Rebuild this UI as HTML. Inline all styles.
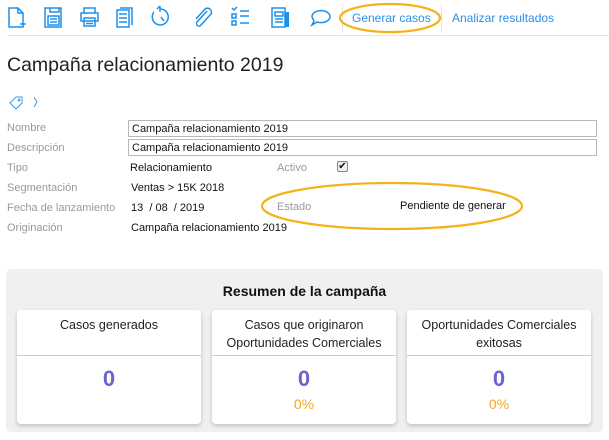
<!DOCTYPE html>
<html><head><meta charset="utf-8"><style>
*{margin:0;padding:0;box-sizing:border-box}
body{width:609px;height:440px;background:#fff;font-family:"Liberation Sans",sans-serif;position:relative;overflow:hidden;color:#111}
.a{position:absolute}
.lbl{position:absolute;left:7px;font-size:11px;color:#9a9a9a}
.val{position:absolute;font-size:11px;color:#111}
.inp{position:absolute;left:128px;width:469px;height:17px;border:1px solid #b9b9b9;font-size:11px;padding:2px 3px}
.card{position:absolute;top:310px;width:184px;height:114px;background:#fff;border-radius:4px;box-shadow:0 2px 4px rgba(0,0,0,.2);text-align:center}
.card .h{height:46px;border-bottom:1px solid #ccc;font-size:12.5px;line-height:18px;padding-top:6px;color:#222}
.card .n{font-size:22px;font-weight:bold;color:#6a63d0;margin-top:10px}
.card .p{font-size:14px;color:#f5a623;margin-top:4px}
svg{position:absolute}
</style></head><body>
<svg width="340" height="36" style="left:0;top:0" fill="none" stroke="#1e90e8" stroke-width="1.5">
<path d="M9 8h9l5 5v14H9z M18 8v5h5 M20 24h6 M23 21v6"/>
<path d="M45 8h16v19H45z M50 8v4h9V8 M48 16h11v9H48z M50 19h7 M50 22h7"/>
<path d="M84 8h11v5H84z M81 13h17v8H81z M84 18h11v8H84z M86 21h7 M86 23.5h7"/>
<path d="M120 8h12v17 M117 10h12v17h-12z M119 14h8 M119 18h8 M119 22h8"/>
<path d="M160 9a8 8 0 1 1-6 3 M160 6v6 M157 9l3-3 M161 17l3 4"/>
<path d="M207 11l-10 11a2.5 2.5 0 0 0 4 3l10-11a4 4 0 0 0-6-5l-9 10"/>
<path d="M232 8l2 2 3-3 M232 14h4v4h-4z M232 21h4v4h-4z M240 11h9 M240 16h9 M240 23h9"/>
<path d="M272 8h13v19h-13z M275 12h8v4h-8z M275 19h8 M275 22h8"/><rect x="285" y="12" width="4" height="15" fill="#1e90e8" stroke="none"/>
<path d="M312 17a9 6 0 1 1 5 5l-5 3 2-4z"/>
</svg>
<div class="a" style="left:342px;top:5px;width:1px;height:28px;background:#e2e2e2"></div>
<div class="a" style="left:441px;top:5px;width:1px;height:28px;background:#e2e2e2"></div>
<div class="a" style="left:352px;top:11px;font-size:12px;color:#2d8ee6">Generar casos</div>
<div class="a" style="left:452px;top:11px;font-size:12px;color:#2d8ee6">Analizar resultados</div>
<div class="a" style="left:7px;top:35px;width:602px;height:1px;background:#e4e4e4"></div>
<svg width="609" height="440" style="left:0;top:0" fill="none" stroke="#f5b218" stroke-width="2.2">
<ellipse cx="390" cy="18" rx="50" ry="14"/>
<ellipse cx="392" cy="206" rx="130" ry="23"/>
</svg>
<div class="a" style="left:7px;top:54px;font-size:19.5px;color:#222">Campaña relacionamiento 2019</div>
<svg width="40" height="16" style="left:8px;top:95px" fill="none" stroke="#3a9ae8" stroke-width="1">
<path d="M2 8l6-6h6v6l-6 6z"/><circle cx="11" cy="5" r="1"/><path d="M26 2l3 5-3 5"/>
</svg>
<div class="lbl" style="top:122px">Nombre</div>
<div class="lbl" style="top:142px">Descripción</div>
<div class="lbl" style="top:162px">Tipo</div>
<div class="lbl" style="top:182px">Segmentación</div>
<div class="lbl" style="top:202px">Fecha de lanzamiento</div>
<div class="lbl" style="top:222px">Originación</div>
<div class="inp" style="top:120px">Campaña relacionamiento 2019</div>
<div class="inp" style="top:139px">Campaña relacionamiento 2019</div>
<div class="val" style="left:130px;top:162px">Relacionamiento</div>
<div class="lbl" style="left:277px;top:162px">Activo</div>
<div class="a" style="left:337px;top:161px;width:11px;height:11px;border:1px solid #888;border-radius:2px;background:#eee;font-size:10px;line-height:9px;text-align:center">✔</div>
<div class="val" style="left:131px;top:182px">Ventas &gt; 15K 2018</div>
<div class="val" style="left:131px;top:202px">13 &nbsp;/ 08 &nbsp;/ 2019</div>
<div class="lbl" style="left:277px;top:201px">Estado</div>
<div class="val" style="left:400px;top:200px">Pendiente de generar</div>
<div class="val" style="left:131px;top:222px">Campaña relacionamiento 2019</div>
<div class="a" style="left:6px;top:269px;width:597px;height:163px;background:#f0f0f0;border-radius:5px"></div>
<div class="a" style="left:6px;top:283px;width:597px;text-align:center;font-size:14px;font-weight:bold;color:#111">Resumen de la campaña</div>
<div class="card" style="left:17px"><div class="h">Casos generados</div><div class="n">0</div></div>
<div class="card" style="left:212px"><div class="h">Casos que originaron<br>Oportunidades Comerciales</div><div class="n">0</div><div class="p">0%</div></div>
<div class="card" style="left:407px"><div class="h">Oportunidades Comerciales<br>exitosas</div><div class="n">0</div><div class="p">0%</div></div>
</body></html>
